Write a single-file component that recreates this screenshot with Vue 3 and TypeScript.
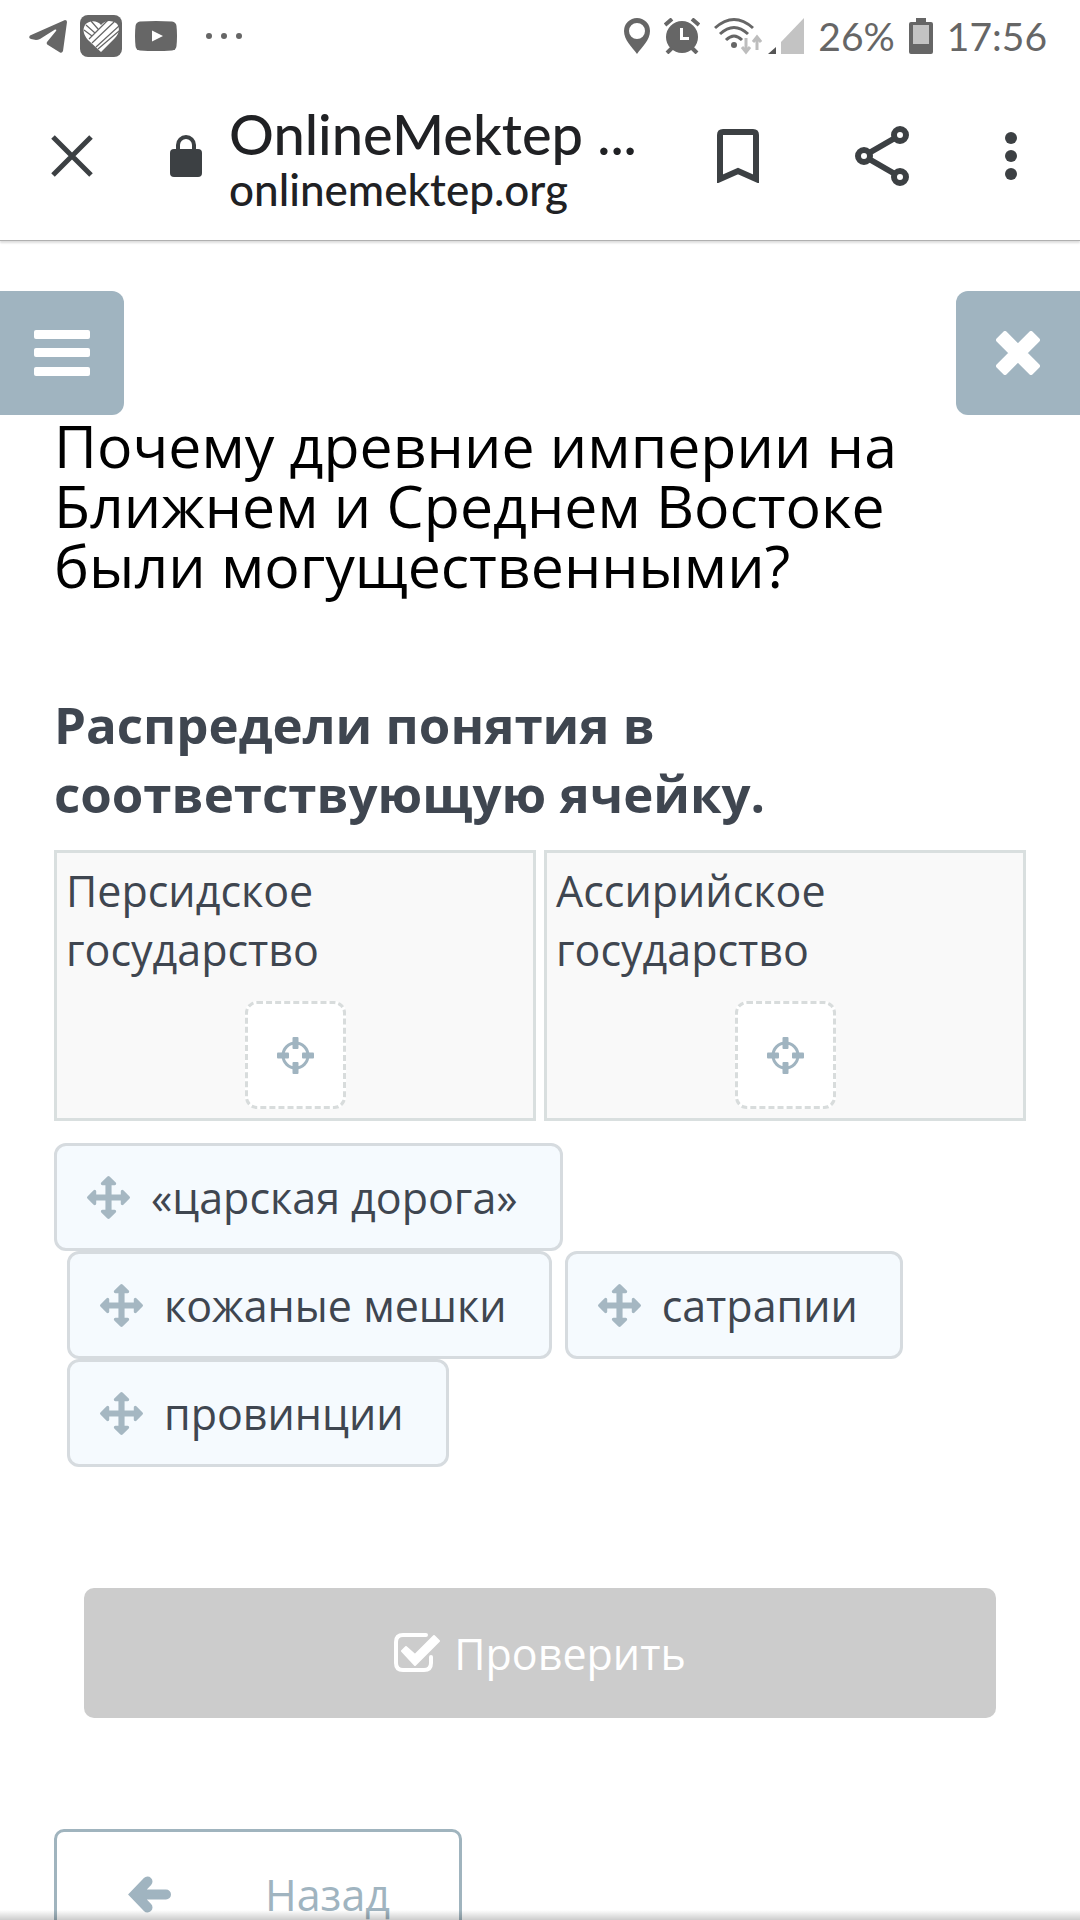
<script setup lang="ts">
interface Concept {
  id: number
  label: string
}

const categories: Concept[] = [
  { id: 1, label: 'Персидское государство' },
  { id: 2, label: 'Ассирийское государство' },
]

const concepts: Concept[] = [
  { id: 1, label: '«царская дорога»' },
  { id: 2, label: 'кожаные мешки' },
  { id: 3, label: 'сатрапии' },
  { id: 4, label: 'провинции' },
]
</script>

<template>
  <div class="screen">
    <div class="status">
      <div class="status-group notices">
        <svg width="38" height="33" viewBox="0 0 38 33" fill="currentColor">
          <path d="M1 15.500Q-1 18 2 19L7 20Q9 20 11 19L26 9.500Q28 9 27 11L18 22Q17 24 19 25L31 32.500Q33 33.500 34 31L38 2Q38 0 36 0Z" />
        </svg>
        <svg width="42" height="42" viewBox="0 0 42 42">
          <rect width="42" height="42" rx="8" fill="currentColor" />
          <path d="M21 10C17 5 9 5 5 10C2 15 4 20 8 25L21 37L35 23C40 18 40 11 36 8C31 5 25 5 21 10Z" fill="#fff" />
          <path d="M9 24L28 5M12 28L34 7M16 32L39 11M18 34L39 16M4 15L12 21M6 10L15 18M11 6L18 14" stroke="currentColor" stroke-width="1.200" fill="none" />
        </svg>
        <svg width="42" height="30" viewBox="0 0 42 30">
          <path d="M5 .500Q21-.500 37 .500Q41 1 41.500 5Q42.500 15 41.500 25Q41 29 37 29.500Q21 30.500 5 29.500Q1 29 .500 25Q-.500 15 .500 5Q1 1 5 .500Z" fill="currentColor" />
          <path d="M17 9.500V20.500L28 15Z" fill="#fff" />
        </svg>
        <svg class="more-notices" width="36" height="6" viewBox="0 0 36 6" fill="currentColor">
          <circle cx="3" cy="3" r="3" /><circle cx="18" cy="3" r="3" /><circle cx="33" cy="3" r="3" />
        </svg>
      </div>
      <div class="status-group">
        <svg width="26" height="36" viewBox="0 0 26 36" fill="currentColor" fill-rule="evenodd">
          <path d="M13 0A13 13 0 0 1 26 13C26 22 18 29 13 36C8 29 0 22 0 13A13 13 0 0 1 13 0ZM13 5A8 8 0 1 0 13 21A8 8 0 1 0 13 5Z" />
        </svg>
        <svg width="36" height="36" viewBox="0 0 36 36">
          <circle cx="18" cy="19" r="16" fill="currentColor" />
          <path d="M1 7L8 1M28 1L35 7M8 30L3 35M28 30L33 35" stroke="currentColor" stroke-width="4" />
          <path d="M17.500 10V20.500H25" fill="none" stroke="#fff" stroke-width="3" />
        </svg>
        <svg width="48" height="38" viewBox="0 0 48 38" fill="none">
          <g stroke="currentColor" stroke-width="3">
            <path d="M1 11Q20-6 39 11M6 17Q20 4 34 17M12 23Q20 15 28 23" />
          </g>
          <circle cx="20" cy="28" r="3" fill="currentColor" />
          <path d="M32 21V34M28 30L32 35L36 30M43 33V21M39 25L43 20L47 25" stroke="#bdbdbd" stroke-width="3" />
        </svg>
        <svg class="signal" width="36" height="36" viewBox="0 0 36 36">
          <path d="M0 36L8 29V36Z" fill="#555" />
          <path d="M13 36V24L36 0V36Z" fill="#c3c3c3" />
        </svg>
        <span>26%</span>
        <svg width="24" height="36" viewBox="0 0 24 36">
          <path d="M7 0H17V4H22Q24 4 24 6V34Q24 36 22 36H2Q0 36 0 34V6Q0 4 2 4H7Z" fill="currentColor" />
          <rect x="4" y="7" width="16" height="19" fill="#c3c3c3" />
        </svg>
        <span>17:56</span>
      </div>
    </div>

    <header class="toolbar">
      <button class="tool" aria-label="Закрыть вкладку">
        <svg width="42" height="42" viewBox="0 0 42 42">
          <path d="M2 2L40 40M40 2L2 40" stroke="currentColor" stroke-width="5" />
        </svg>
      </button>
      <svg class="lock" width="32" height="42" viewBox="0 0 32 42">
        <rect y="14" width="32" height="28" rx="4" fill="currentColor" />
        <path d="M8 15V10A8 8 0 0 1 24 10V15" fill="none" stroke="currentColor" stroke-width="4" />
      </svg>
      <div class="site">
        <div class="site-title">OnlineMektep ...</div>
        <div class="site-host">onlinemektep.org</div>
      </div>
      <div class="tools">
        <button class="tool" aria-label="Закладка">
          <svg width="42" height="54" viewBox="0 0 42 54">
            <path d="M3 50V6Q3 3 6 3H36Q39 3 39 6V50L21 42Z" fill="none" stroke="currentColor" stroke-width="6" />
          </svg>
        </button>
        <button class="tool" aria-label="Поделиться">
          <svg width="54" height="60" viewBox="0 0 54 60" fill="none" stroke="currentColor" stroke-width="6">
            <path d="M14 27L40 12M14 33L40 48" />
            <circle cx="9" cy="30" r="6" /><circle cx="45" cy="9" r="6" /><circle cx="45" cy="51" r="6" />
          </svg>
        </button>
        <button class="tool" aria-label="Меню браузера">
          <svg width="12" height="48" viewBox="0 0 12 48" fill="currentColor">
            <circle cx="6" cy="6" r="6" /><circle cx="6" cy="24" r="6" /><circle cx="6" cy="42" r="6" />
          </svg>
        </button>
      </div>
    </header>

    <main class="page">
      <div class="page-actions">
        <button class="corner corner-left" aria-label="Меню">
          <svg width="56" height="46" viewBox="0 0 56 46" fill="currentColor">
            <rect width="56" height="9" rx="2" /><rect y="18" width="56" height="9" rx="2" /><rect y="37" width="56" height="9" rx="2" />
          </svg>
        </button>
        <button class="corner corner-right" aria-label="Закрыть">
          <svg width="44" height="44" viewBox="0 0 44 44">
            <path d="M9 2L22 15L35 2L42 9L29 22L42 35L35 42L22 29L9 42L2 35L15 22L2 9Z" fill="currentColor" stroke="currentColor" stroke-width="4" stroke-linejoin="round" />
          </svg>
        </button>
      </div>

      <div class="content">
        <h1 class="question">Почему древние империи на Ближнем и Среднем Востоке были могущественными?</h1>
        <h2 class="task">Распредели понятия в соответствующую ячейку.</h2>

        <div class="categories">
          <section v-for="category in categories" :key="category.id" class="category">
            <div class="category-name">{{ category.label }}</div>
            <button class="drop" :aria-label="category.label">
              <svg width="37" height="37" viewBox="0 0 37 37">
                <circle cx="18.500" cy="18.500" r="12.500" fill="none" stroke="currentColor" stroke-width="3" />
                <g fill="currentColor">
                  <rect x="15.500" y="0" width="6" height="12" rx="1" /><rect x="15.500" y="25" width="6" height="12" rx="1" />
                  <rect x="0" y="15.500" width="12" height="6" rx="1" /><rect x="25" y="15.500" width="12" height="6" rx="1" />
                </g>
              </svg>
            </button>
          </section>
        </div>

        <div class="concepts">
          <button v-for="concept in concepts" :key="concept.id" class="concept">
            <svg width="43" height="43" viewBox="0 0 1792 1792" fill="currentColor">
              <path d="M1792 896q0 26-19 45l-256 256q-19 19-45 19t-45-19-19-45v-128h-384v384h128q26 0 45 19t19 45-19 45l-256 256q-19 19-45 19t-45-19l-256-256q-19-19-19-45t19-45 45-19h128v-384h-384v128q0 26-19 45t-45 19-45-19l-256-256q-19-19-19-45t19-45l256-256q19-19 45-19t45 19 19 45v128h384v-384h-128q-26 0-45-19t-19-45 19-45l256-256q19-19 45-19t45 19l256 256q19 19 19 45t-19 45-45 19h-128v384h384v-128q0-26 19-45t45-19 45 19l256 256q19 19 19 45z" />
            </svg>
            <span>{{ concept.label }}</span>
          </button>
        </div>

        <button class="check" disabled>
          <svg width="46" height="40" viewBox="0 0 46 40">
            <path d="M32 2H9Q2 2 2 9V30Q2 37 9 37H30Q37 37 37 30V24" fill="none" stroke="currentColor" stroke-width="4" stroke-linecap="round" />
            <path d="M8 18L12 14L21 22L40 3L45 8L21 32Z" fill="currentColor" stroke="currentColor" stroke-width="2" stroke-linejoin="round" />
          </svg>
          <span>Проверить</span>
        </button>

        <button class="back">
          <svg width="43" height="37" viewBox="0 0 43 37" fill="none" stroke="currentColor" stroke-width="10" stroke-linecap="round">
            <path d="M38 18.500H12M19.500 5.500L7 18.500L19.500 31.500" />
          </svg>
          <span>Назад</span>
        </button>
      </div>
    </main>
    <div class="bottom-shade"></div>
  </div>
</template>

<style>
body {
  margin: 0;
  background: #fff;
}
</style>

<style scoped>
.screen {
  position: relative;
  display: flex;
  flex-direction: column;
  height: 100vh;
  overflow: hidden;
  background: #fff;
  font-family: "Open Sans", "Noto Sans", sans-serif;
  color: #3f4650;
}

svg {
  display: block;
  flex: none;
}

button {
  margin: 0;
  padding: 0;
  border: 0;
  background: none;
  font: inherit;
  color: inherit;
}

.status {
  display: flex;
  flex: none;
  align-items: center;
  justify-content: space-between;
  height: 72px;
  padding: 0 33px 0 29px;
  font-family: "Lato", sans-serif;
  font-size: 39px;
  line-height: 44px;
  color: #666;
}

.status-group {
  display: flex;
  align-items: center;
  gap: 14px;
}

.notices {
  gap: 13px;
}

.more-notices {
  margin-left: 16px;
}

.signal {
  margin-left: -8px;
}

.toolbar {
  display: flex;
  flex: none;
  align-items: center;
  height: 168px;
  padding: 0 63px 0 51px;
  border-bottom: 1px solid #b0b0b0;
  box-shadow: 0 2px 2px #ddd;
  color: #3c4043;
}

.lock {
  margin: 0 27px 0 77px;
}

.site {
  flex: 1;
  min-width: 0;
  font-family: "Lato", sans-serif;
  font-weight: 500;
  color: #202124;
  white-space: nowrap;
}

.site-title {
  font-size: 56px;
  line-height: 66px;
}

.site-host {
  font-size: 44px;
  line-height: 44px;
}

.tools {
  display: flex;
  align-items: center;
  gap: 96px;
}

.page {
  flex: 1;
  min-height: 0;
  overflow-y: auto;
  scrollbar-width: none;
  padding-top: 50px;
}

.page-actions {
  display: flex;
  justify-content: space-between;
}

.corner {
  display: flex;
  align-items: center;
  justify-content: center;
  width: 124px;
  height: 124px;
  background: #a0b4c0;
  color: #fff;
}

.corner-left {
  border-radius: 0 12px 12px 0;
}

.corner-right {
  border-radius: 12px 0 0 12px;
}

.content {
  padding: 0 54px;
  font-size: 43px;
  line-height: 59px;
}

.question {
  margin: 0;
  font-size: 59px;
  font-weight: 400;
  line-height: 60px;
  color: #000;
}

.task {
  margin: 95px 0 22px;
  font-size: 51px;
  font-weight: 700;
  line-height: 69px;
}

.categories {
  display: grid;
  grid-template-columns: 1fr 1fr;
  gap: 8px;
}

.category {
  display: flex;
  flex-direction: column;
  gap: 22px;
  padding: 8px 9px 9px;
  border: 3px solid #d9dfdf;
  background: #f9f9f9;
}

.category-name {
  max-width: 300px;
}

.drop {
  display: flex;
  align-items: center;
  justify-content: center;
  align-self: center;
  width: 101px;
  height: 108px;
  border: 3px dashed #d8dcdc;
  border-radius: 12px;
  background: #fff;
  color: #a0b4c0;
}

.concepts {
  display: flex;
  flex-wrap: wrap;
  margin-top: 22px;
}

.concept {
  display: flex;
  align-items: center;
  gap: 21px;
  height: 108px;
  margin-left: 13px;
  padding: 0 42px 0 30px;
  border: 3px solid #d6dbdf;
  border-radius: 12px;
  background: #f5fafe;
}

.concept:first-child {
  margin-left: 0;
}

.concept svg {
  color: #a5b7c2;
}

.check {
  display: flex;
  align-items: center;
  justify-content: center;
  gap: 14px;
  width: calc(100% - 60px);
  height: 130px;
  margin: 121px 30px 0;
  border-radius: 10px;
  background: #ccc;
  color: #fff;
}

.back {
  display: flex;
  align-items: center;
  width: 42%;
  height: 130px;
  margin: 111px 0 60px;
  padding: 0 71px;
  gap: 94px;
  border: 3px solid #a0b4be;
  border-radius: 10px;
  color: #a0b4c0;
}

.bottom-shade {
  position: absolute;
  right: 0;
  bottom: 0;
  left: 0;
  height: 10px;
  background: linear-gradient(rgba(0, 0, 0, 0), rgba(0, 0, 0, 0.2));
}
</style>
